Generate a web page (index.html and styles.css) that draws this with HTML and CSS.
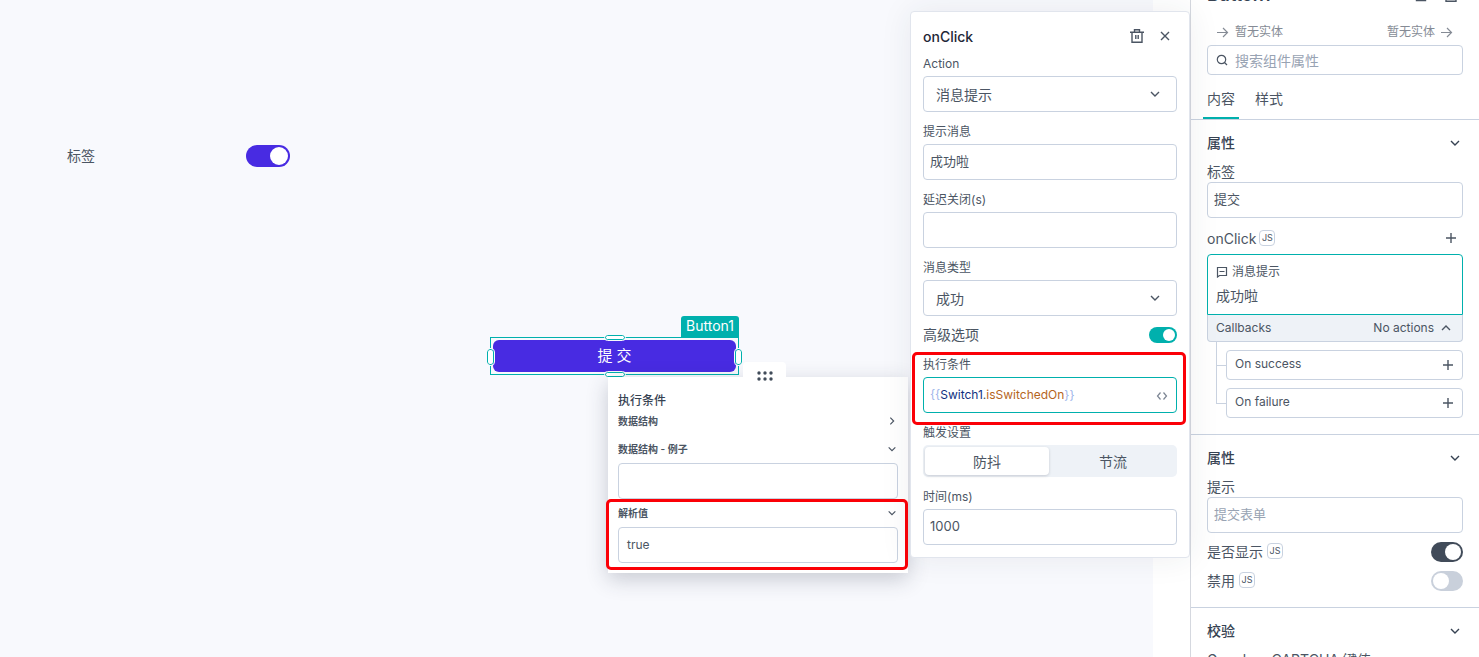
FILE: index.html
```html
<!DOCTYPE html>
<html lang="zh-CN">

<head>
    <meta charset="UTF-8">
    <meta name="viewport" content="width=device-width, initial-scale=1.0">
    <title>Button1</title>
    <link rel="stylesheet" href="styles.css">
</head>

<body>
    <svg class="sprite" aria-hidden="true">
        <symbol id="chevron" viewBox="0 0 12 12"><path d="M2 4l4 4 4-4" /></symbol>
        <symbol id="plus" viewBox="0 0 12 12"><path d="M6 1v10M1 6h10" /></symbol>
        <symbol id="arrow" viewBox="0 0 12 12"><path d="M0 6.500h10.500M6 2l4.500 4.500L6 11" /></symbol>
        <symbol id="trash" viewBox="0 0 14 14"><path d="M0 3.200h14M2 3.200v10h10v-10M4.500 3V.7h5V3M5.800 6v4M8.200 6v4" /></symbol>
    </svg>

    <div class="app">
        <main class="canvas">
            <div class="switch-widget">
                <label for="switch1">标签</label>
                <input type="checkbox" id="switch1" class="toggle toggle-large" checked>
            </div>

            <div class="button-widget">
                <span class="widget-name">Button1</span>
                <button class="submit-button">提 交</button>
                <span class="handle handle-top"></span>
                <span class="handle handle-bottom"></span>
                <span class="handle handle-left"></span>
                <span class="handle handle-right"></span>
            </div>
        </main>

        <aside class="sidebar">
            <header class="sidebar-header">
                <h1>Button1</h1>
                <button class="icon-button" aria-label="复制">
                    <svg width="14" height="14" viewBox="0 0 14 14"><path d="M2.500 1.500h9v11h-9z" /></svg>
                </button>
                <button class="icon-button" aria-label="删除">
                    <svg width="14" height="14"><use href="#trash" /></svg>
                </button>
            </header>

            <div class="entities">
                <span><svg width="12" height="12"><use href="#arrow" /></svg>暂无实体</span>
                <span>暂无实体<svg width="12" height="12"><use href="#arrow" /></svg></span>
            </div>

            <div class="search">
                <svg width="12" height="12" viewBox="0 0 12 12"><circle cx="5.500" cy="5.500" r="4.200" /><path d="M8.500 8.500l2.500 2.500" /></svg>
                <input type="search" placeholder="搜索组件属性" aria-label="搜索组件属性">
            </div>

            <nav class="tabs">
                <button class="tab active">内容</button>
                <button class="tab">样式</button>
            </nav>

            <section class="section">
                <div class="section-title">
                    <h2>属性</h2>
                    <svg width="12" height="12"><use href="#chevron" /></svg>
                </div>
                <div class="property"><label for="label-text">标签</label></div>
                <input type="text" id="label-text" class="text-input" value="提交">

                <div class="property event">
                    <span>onClick</span>
                    <button class="js-button">JS</button>
                    <button class="icon-button push" aria-label="添加"><svg width="12" height="12"><use href="#plus" /></svg></button>
                </div>
                <div class="action-card">
                    <button class="action-body">
                        <span class="action-type">
                            <svg width="12" height="12" viewBox="0 0 12 12"><path d="M1.500 1.500h9v8h-7l-2 1.500zM3.500 5.500h5" /></svg>消息提示
                        </span>
                        <span class="action-message">成功啦</span>
                    </button>
                    <button class="callbacks-row">
                        <span>Callbacks</span>
                        <span class="push">No actions</span>
                        <svg class="up" width="12" height="12"><use href="#chevron" /></svg>
                    </button>
                </div>
                <ul class="callbacks">
                    <li><button><span>On success</span><svg width="12" height="12"><use href="#plus" /></svg></button></li>
                    <li><button><span>On failure</span><svg width="12" height="12"><use href="#plus" /></svg></button></li>
                </ul>
            </section>

            <section class="section">
                <div class="section-title">
                    <h2>属性</h2>
                    <svg width="12" height="12"><use href="#chevron" /></svg>
                </div>
                <div class="property"><label for="tooltip-text">提示</label></div>
                <input type="text" id="tooltip-text" class="text-input" placeholder="提交表单">
                <div class="property">
                    <label for="visible">是否显示</label>
                    <button class="js-button">JS</button>
                    <input type="checkbox" id="visible" class="toggle toggle-medium push" checked>
                </div>
                <div class="property">
                    <label for="disabled">禁用</label>
                    <button class="js-button">JS</button>
                    <input type="checkbox" id="disabled" class="toggle toggle-medium push">
                </div>
            </section>

            <section class="section">
                <div class="section-title">
                    <h2>校验</h2>
                    <svg width="12" height="12"><use href="#chevron" /></svg>
                </div>
                <div class="property"><label for="captcha">Google reCAPTCHA 键值</label></div>
                <input type="text" id="captcha" class="text-input">
            </section>
        </aside>

        <!-- value preview -->
        <div class="popup preview">
            <div class="drag-handle">
                <svg width="16" height="10" viewBox="0 0 16 10">
                    <circle cx="2" cy="2" r="1.700" /><circle cx="8" cy="2" r="1.700" /><circle cx="14" cy="2" r="1.700" />
                    <circle cx="2" cy="8" r="1.700" /><circle cx="8" cy="8" r="1.700" /><circle cx="14" cy="8" r="1.700" />
                </svg>
            </div>
            <h3>执行条件</h3>
            <button class="fold">数据结构<svg class="right" width="12" height="12"><use href="#chevron" /></svg></button>
            <div class="preview-group">
                <button class="fold">数据结构 - 例子<svg width="12" height="12"><use href="#chevron" /></svg></button>
                <div class="preview-value"></div>
            </div>
            <div class="preview-group marked">
                <button class="fold">解析值<svg width="12" height="12"><use href="#chevron" /></svg></button>
                <div class="preview-value">true</div>
            </div>
        </div>

        <!-- action editor -->
        <div class="popup editor">
            <header class="editor-header">
                <h3>onClick</h3>
                <button class="icon-button" aria-label="删除"><svg width="14" height="14"><use href="#trash" /></svg></button>
                <button class="icon-button" aria-label="关闭"><svg width="14" height="14" viewBox="0 0 14 14"><path d="M3 3l8 8M11 3l-8 8" /></svg></button>
            </header>
            <div class="field">
                <label for="action">Action</label>
                <div class="select">
                    <select id="action"><option>消息提示</option></select>
                    <svg width="12" height="12"><use href="#chevron" /></svg>
                </div>
            </div>
            <div class="field">
                <label for="message">提示消息</label>
                <input type="text" id="message" class="text-input" value="成功啦">
            </div>
            <div class="field">
                <label for="delay">延迟关闭(s)</label>
                <input type="text" id="delay" class="text-input">
            </div>
            <div class="field">
                <label for="type">消息类型</label>
                <div class="select">
                    <select id="type"><option>成功</option></select>
                    <svg width="12" height="12"><use href="#chevron" /></svg>
                </div>
            </div>
            <div class="property">
                <label for="advanced">高级选项</label>
                <input type="checkbox" id="advanced" class="toggle toggle-small push" checked>
            </div>
            <div class="field marked">
                <label id="condition-label">执行条件</label>
                <div class="code-input">
                    <div class="code" contenteditable="true" role="textbox" aria-labelledby="condition-label" spellcheck="false"><span class="brace">{{</span><span class="variable">Switch1</span>.<span class="member">isSwitchedOn</span><span class="brace">}}</span></div>
                    <svg width="12" height="12" viewBox="0 0 12 12"><path d="M4.500 3.500l-3 3.500 3 3.500M7.500 3.500l3 3.500-3 3.500" /></svg>
                </div>
            </div>
            <div class="field">
                <label>触发设置</label>
                <div class="segments">
                    <button class="active">防抖</button>
                    <button>节流</button>
                </div>
            </div>
            <div class="field">
                <label for="time">时间(ms)</label>
                <input type="text" id="time" class="text-input" value="1000">
            </div>
        </div>
    </div>
</body>

</html>
```

FILE: styles.css
```css
* {
    box-sizing: border-box;
}

body {
    margin: 0;
    font-family: Inter, "Noto Sans CJK SC", sans-serif;
    font-size: 14px;
    line-height: 20px;
    color: #4b5563;
    background-color: #fff;
}

h1,
h2,
h3,
ul {
    margin: 0;
    padding: 0;
}

button,
input,
select {
    font: inherit;
    color: inherit;
}

button {
    padding: 0;
    border: none;
    background: none;
    cursor: pointer;
}

svg {
    display: block;
    flex-shrink: 0;
    fill: none;
    stroke: currentColor;
    stroke-width: 1.4;
}

.sprite {
    display: none;
}

.app {
    position: relative;
    display: flex;
    height: 100vh;
    overflow: hidden;
}

/* Canvas */
.canvas {
    position: relative;
    flex: 1;
    margin-right: 37px;
    background-color: #f8f9fd;
}

.switch-widget {
    position: absolute;
    left: 67px;
    top: 145px;
    width: 223px;
    display: flex;
    align-items: center;
    justify-content: space-between;
}

.button-widget {
    position: absolute;
    left: 490px;
    top: 337px;
    width: 249px;
    padding: 2px;
    border: 1px solid #00b0ad;
}

.widget-name {
    position: absolute;
    right: -1px;
    bottom: 100%;
    padding: 0 5px 2px;
    background-color: #00b0ad;
    color: #fff;
    border-radius: 3px 3px 0 0;
}

.submit-button {
    display: block;
    width: 100%;
    height: 32px;
    border-radius: 6px;
    background-color: #482be2;
    color: #fff;
    font-size: 15px;
}

.handle {
    position: absolute;
    border: 1px solid #00b0ad;
    border-radius: 3px;
    background-color: #fff;
    outline: 1px solid #f8f9fd;
}

.handle-top,
.handle-bottom {
    left: 114px;
    width: 20px;
    height: 5px;
}

.handle-top {
    top: -3px;
}

.handle-bottom {
    bottom: -3px;
}

.handle-left,
.handle-right {
    top: 11px;
    width: 7px;
    height: 16px;
}

.handle-left {
    left: -4px;
}

.handle-right {
    right: -4px;
}

/* Toggles */
.toggle {
    appearance: none;
    display: flex;
    flex-shrink: 0;
    margin: 0;
    padding: 2px;
    border-radius: 12px;
    background-color: #c9d0db;
    cursor: pointer;
}

.toggle::before {
    content: "";
    height: 100%;
    aspect-ratio: 1;
    border-radius: 50%;
    background-color: #fff;
}

.toggle:checked {
    justify-content: flex-end;
}

.toggle-large {
    width: 44px;
    height: 22px;
}

.toggle-large:checked {
    background-color: #482be2;
}

.toggle-medium {
    width: 32px;
    height: 20px;
}

.toggle-medium:checked {
    background-color: #414b59;
}

.toggle-small {
    width: 28px;
    height: 16px;
}

.toggle-small:checked {
    background-color: #00b0ad;
}

.push {
    margin-left: auto;
}

/* Sidebar */
.sidebar {
    width: 289px;
    border-left: 1px solid #d5d8df;
    background-color: #fff;
    overflow: hidden;
}

.sidebar-header {
    display: flex;
    align-items: center;
    gap: 16px;
    margin-top: -15px;
    padding: 0 21px 0 16px;
}

.sidebar-header h1 {
    flex: 1;
    font-size: 18px;
    font-weight: 600;
    line-height: 20px;
    color: #364252;
}

.entities {
    display: flex;
    justify-content: space-between;
    margin-top: 17px;
    padding: 0 26px;
    font-size: 12px;
    color: #858b95;
}

.entities span {
    display: flex;
    align-items: center;
    gap: 6px;
}

.entities svg {
    stroke-width: 1.2;
}

.search {
    display: flex;
    align-items: center;
    gap: 7px;
    height: 30px;
    margin: 3px 16px 0;
    padding: 0 8px;
    border: 1px solid #c9d2e0;
    border-radius: 4px;
}

.search svg {
    stroke-width: 1.2;
}

.search input {
    flex: 1;
    min-width: 0;
    padding: 1px 0 0;
    border: none;
    outline: none;
}

input::placeholder {
    color: #98a3b3;
    opacity: 1;
}

.tabs {
    display: flex;
    gap: 12px;
    margin-top: 14px;
    padding: 0 12px;
    border-bottom: 1px solid #c9d2e0;
}

.tab {
    padding: 0 4px 8px;
    border-bottom: 2px solid transparent;
}

.tab.active {
    border-color: #00b0ad;
}

.section {
    padding: 13px 16px 16px;
    border-bottom: 1px solid #c9d2e0;
}

.section-title {
    display: flex;
    align-items: center;
    justify-content: space-between;
    padding-right: 2px;
    color: #364252;
}

.section-title h2 {
    font-size: 14px;
    font-weight: 500;
}

.property {
    display: flex;
    align-items: center;
    gap: 4px;
    height: 20px;
    margin-top: 9px;
}

.property.event {
    gap: 3px;
    margin-top: 11px;
}

.property .icon-button {
    margin-right: 6px;
    padding-bottom: 2px;
}

.js-button {
    width: 16px;
    height: 16px;
    margin-bottom: 2px;
    border: 1px solid #c9d2e0;
    border-radius: 4px;
    font-size: 9px;
    line-height: 12px;
}

.text-input {
    display: block;
    width: 100%;
    height: 36px;
    padding: 0 6px 3px;
    border: 1px solid #c9d2e0;
    border-radius: 4px;
    background-color: #fff;
    font-size: 13px;
    outline: none;
}

.text-input:focus {
    border-color: #00b0ad;
}

.action-card {
    margin-top: 5px;
    font-size: 12px;
}

.action-body {
    display: block;
    width: 100%;
    padding: 7px 8px 8px;
    border: 1px solid #00b0ad;
    border-radius: 4px 4px 0 0;
    text-align: left;
}

.action-type {
    display: flex;
    align-items: center;
    gap: 4px;
}

.action-type svg {
    stroke-width: 1.2;
}

.action-message {
    display: block;
    margin-top: 4px;
    font-size: 14px;
}

.callbacks-row {
    display: flex;
    align-items: center;
    gap: 6px;
    width: 100%;
    height: 27px;
    padding: 0 10px 0 8px;
    border: 1px solid #c9d2e0;
    border-top: none;
    border-radius: 0 0 4px 4px;
    background-color: #eef2f7;
}

.callbacks {
    list-style: none;
    padding-left: 19px;
}

.callbacks li {
    position: relative;
    padding-top: 8px;
}

/* Branch lines from the card to each callback */
.callbacks li::before {
    content: "";
    position: absolute;
    left: -10px;
    top: 0;
    width: 9px;
    height: 23px;
    border-left: 1px solid #c9d2e0;
    border-bottom: 1px solid #c9d2e0;
}

.callbacks li + li::before {
    top: -15px;
    height: 38px;
}

.callbacks button {
    display: flex;
    align-items: center;
    justify-content: space-between;
    width: 100%;
    height: 30px;
    padding: 0 8px;
    border: 1px solid #c9d2e0;
    border-radius: 4px;
    font-size: 12px;
}

.callbacks span {
    padding-bottom: 2px;
}

.up {
    transform: rotate(180deg);
}

.right {
    transform: rotate(-90deg);
}

/* Popups */
.popup {
    position: absolute;
    background-color: #fff;
}

.preview {
    right: 571px;
    top: 377px;
    width: 300px;
    padding: 15px 10px 10px;
    box-shadow: 0 6px 20px rgba(40, 50, 70, 0.24);
}

.preview h3 {
    font-size: 12px;
    font-weight: 500;
    line-height: 18px;
    color: #364252;
}

.drag-handle {
    position: absolute;
    left: 135px;
    top: -15px;
    display: flex;
    justify-content: center;
    width: 43px;
    height: 20px;
    padding-top: 9px;
    border-radius: 4px 4px 0 0;
    background-color: #fff;
}

.drag-handle svg {
    fill: #414b59;
    stroke: none;
}

.fold {
    display: flex;
    align-items: center;
    justify-content: space-between;
    width: 100%;
    margin-top: 3px;
    font-size: 10px;
    font-weight: 600;
    line-height: 16px;
}

.fold svg {
    width: 10px;
    height: 10px;
    margin-right: 1px;
}

.preview-group {
    margin-top: 12px;
}

.preview-group .fold {
    margin-top: 0;
}

.preview-group + .preview-group {
    margin-top: 6px;
}

.preview-value {
    height: 36px;
    margin-top: 6px;
    padding: 0 8px;
    border: 1px solid #c9d2e0;
    border-radius: 4px;
    font-size: 12px;
    line-height: 34px;
}

.editor {
    right: 289px;
    top: 11px;
    width: 280px;
    padding: 15px 12px 12px;
    border: 1px solid #e1e5ed;
    border-radius: 4px;
    box-shadow: 0 0 32px rgba(40, 50, 70, 0.08);
}

.editor-header {
    display: flex;
    align-items: center;
    gap: 14px;
    padding-right: 5px;
}

.editor-header h3 {
    flex: 1;
    font-size: 14px;
    font-weight: 500;
    color: #1f2837;
}

.editor-header .icon-button {
    padding-bottom: 2px;
}

.editor-header + .field {
    margin-top: 8px;
}

.field {
    margin-top: 11px;
}

.field label {
    display: block;
    margin-bottom: 3px;
    font-size: 12px;
    line-height: 18px;
}

.select {
    display: grid;
    align-items: center;
}

.select select,
.select svg {
    grid-area: 1 / 1;
}

.select select {
    appearance: none;
    width: 100%;
    height: 36px;
    padding: 1px 12px 0;
    border: 1px solid #c9d2e0;
    border-radius: 4px;
    background-color: #fff;
}

.select svg {
    justify-self: end;
    margin-right: 16px;
    pointer-events: none;
}

.code-input {
    display: flex;
    align-items: center;
    height: 36px;
    padding: 0 8px 0 6px;
    border: 1px solid #00b0ad;
    border-radius: 4px;
    font-size: 12px;
}

.code-input svg {
    color: #7b8492;
    stroke-width: 1.2;
}

.code {
    flex: 1;
    outline: none;
}

.brace {
    color: #9db4ea;
}

.variable {
    color: #10307f;
}

.member {
    color: #b5651d;
}

.segments {
    display: flex;
    gap: 2px;
    height: 32px;
    padding: 2px;
    border-radius: 5px;
    background-color: #eef2f7;
}

.segments button {
    flex: 1;
    padding-top: 1px;
    border-radius: 4px;
}

.segments .active {
    background-color: #fff;
    box-shadow: 0 1px 3px rgba(40, 50, 70, 0.2);
}

.marked {
    position: relative;
}

.marked::after {
    content: "";
    position: absolute;
    border: 3px solid #fb0007;
    border-radius: 5px;
    pointer-events: none;
}

.field.marked::after {
    inset: -4px -9px -12px -11px;
}

.preview-group.marked::after {
    inset: -6px -10px -7px -12px;
}
```
